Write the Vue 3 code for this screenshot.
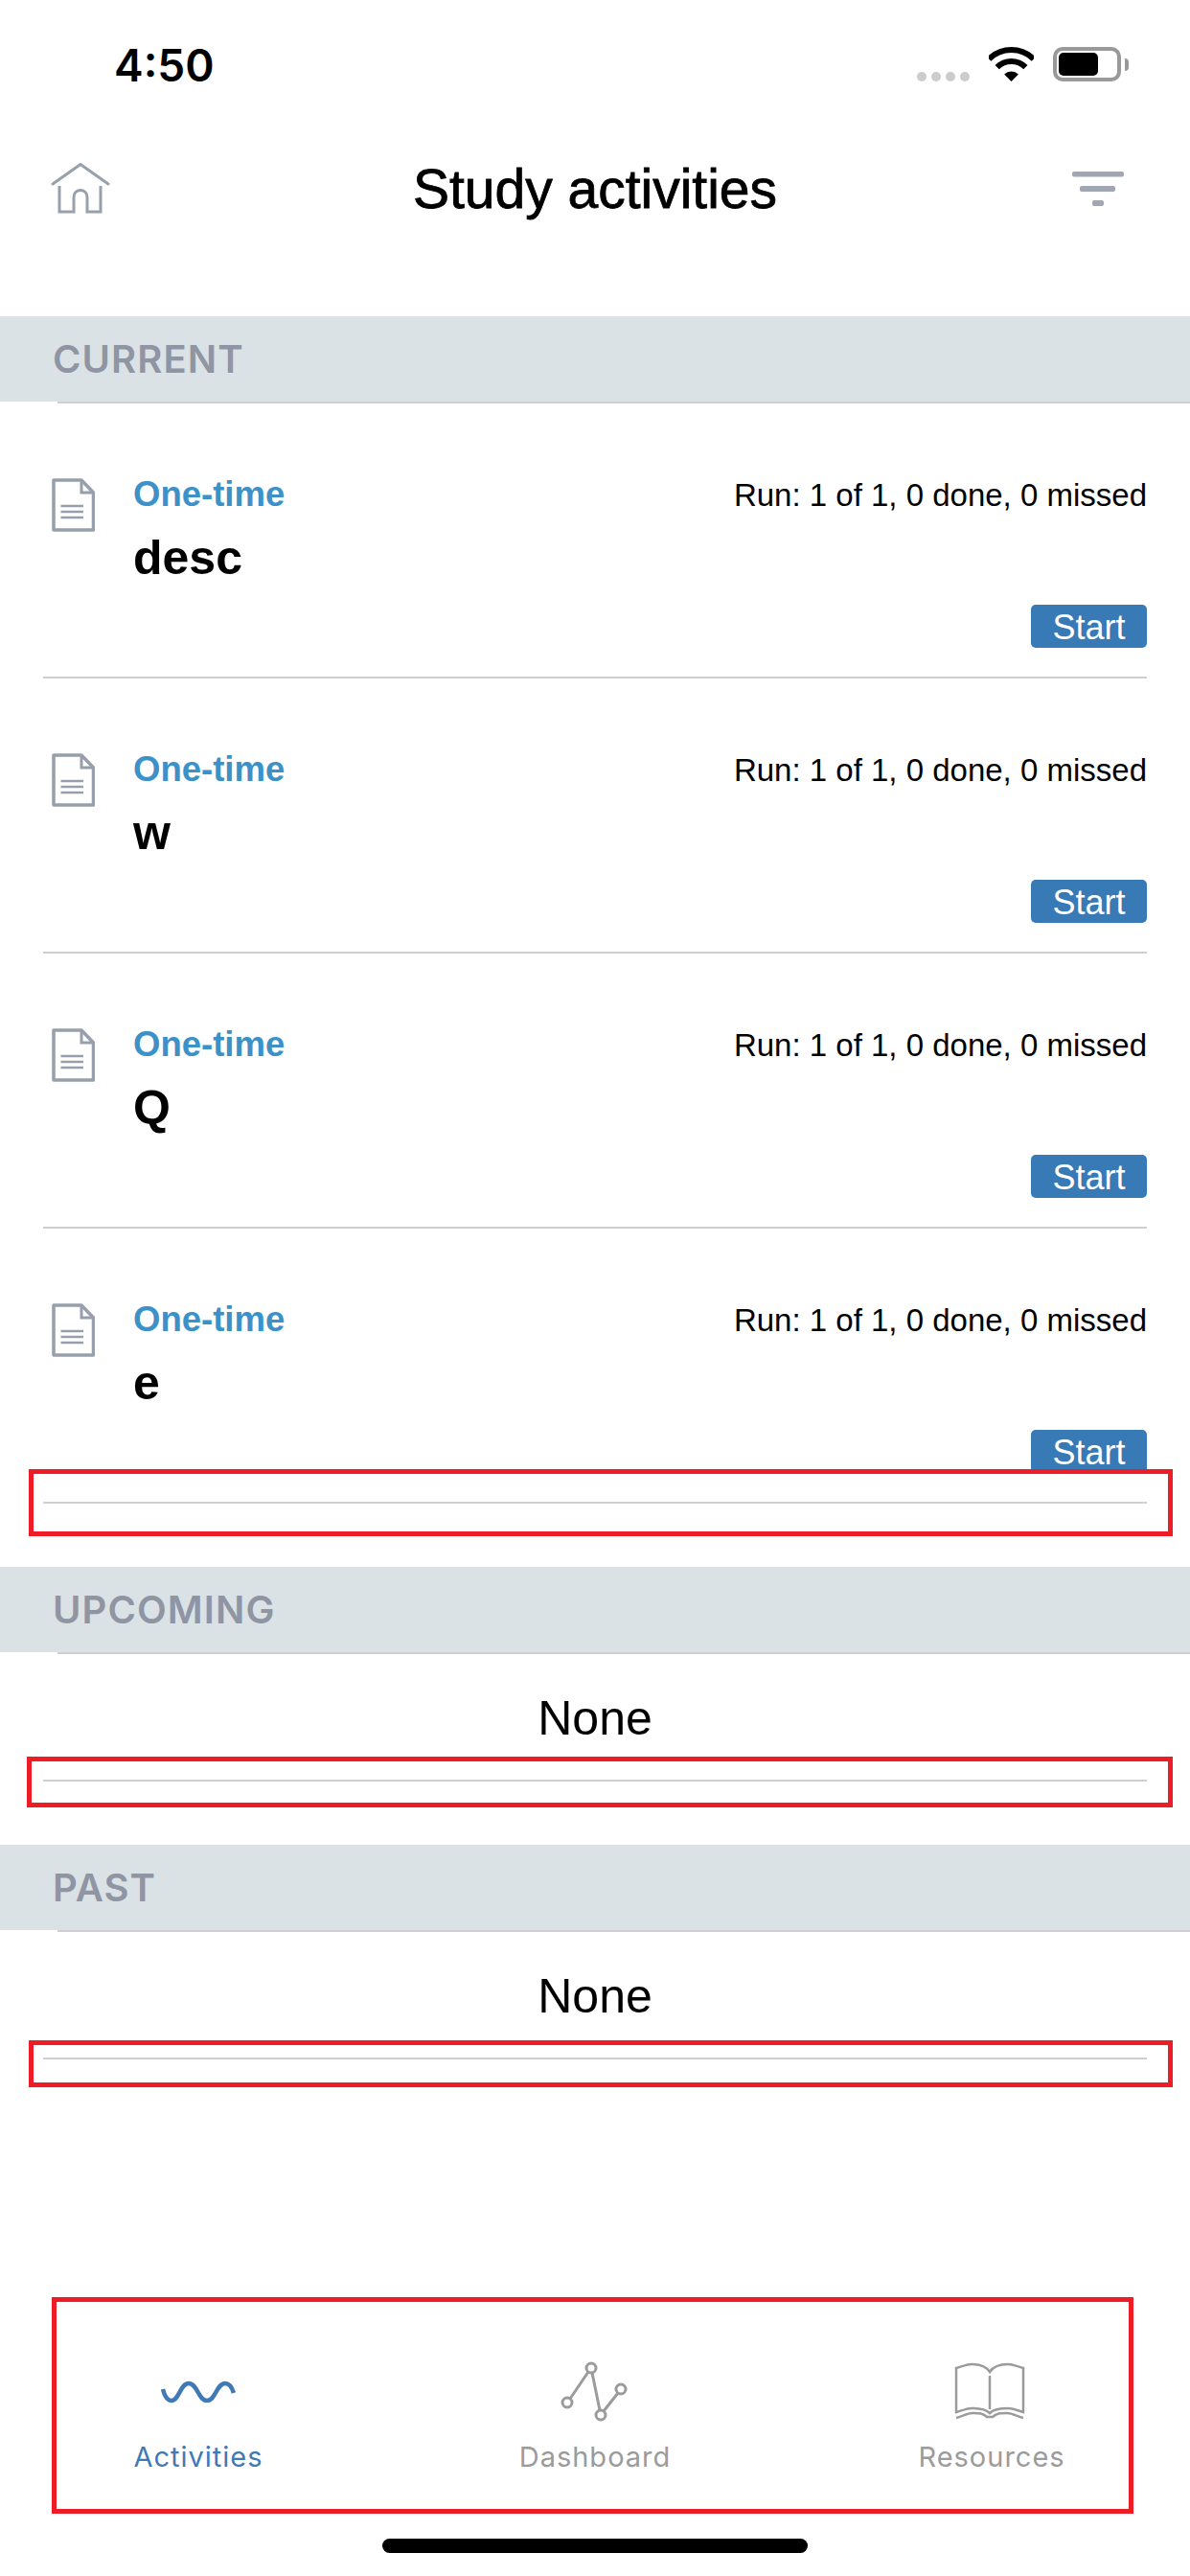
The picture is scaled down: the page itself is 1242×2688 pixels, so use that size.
<template>
  <div class="page">
    <div class="status">
      <span class="time">4:50</span>
      <div class="status-icons">
        <div class="dots"><i v-for="n in 4" :key="n"></i></div>
        <svg class="wifi" width="47" height="36" viewBox="0 0 47 36">
          <path d="M.2 12.7A33 33 0 0 1 46.8 12.7" fill="none" stroke="#000" stroke-width="6" />
          <path d="M8.65 21.15A21 21 0 0 1 38.35 21.15" fill="none" stroke="#000" stroke-width="6" />
          <path d="M23.5 36L16.1 28.6A10.5 10.5 0 0 1 30.9 28.6Z" fill="#000" />
        </svg>
        <div class="battery"><div class="charge"></div></div>
        <div class="nub"></div>
      </div>
    </div>

    <header class="nav">
      <svg class="home" width="64" height="56" viewBox="0 0 64 56" fill="none" stroke="#98a0ae" stroke-width="3">
        <path d="M3 23L32 2.500L61 23" stroke-linecap="round" stroke-linejoin="round" />
        <path d="M10 25V52H25V37C25 27 39 27 39 37V52H53V25" />
      </svg>
      <h1>Study activities</h1>
      <svg class="filter" width="54" height="36" viewBox="0 0 54 36" fill="#a0a6b2">
        <rect x="0" y="0" width="54" height="5.500" rx="2" />
        <rect x="8" y="15" width="37" height="6" rx="2" />
        <rect x="21" y="30" width="12" height="6" rx="2" />
      </svg>
    </header>

    <section class="section current">
      <h2>CURRENT</h2>
      <div class="list">
        <div v-for="item in activities" :key="item" class="row">
          <svg class="doc" width="45" height="56" viewBox="0 0 45 56" fill="none" stroke="#979eac">
            <path d="M2 2H31L43.500 15V54H2Z" stroke-width="3.500" stroke-linejoin="round" />
            <path d="M31 2V15H43.500" stroke-width="3" />
            <path d="M9.500 29H33M9.500 35H33M9.500 41H33" stroke-width="2.500" />
          </svg>
          <div class="row-body">
            <div class="row-top">
              <span class="kind">One-time</span>
              <span class="run">Run: 1 of 1, 0 done, 0 missed</span>
            </div>
            <div class="name">{{ item }}</div>
            <div class="actions"><button class="start">Start</button></div>
          </div>
        </div>
      </div>
      <div class="mark mark-current"></div>
    </section>

    <section class="section upcoming">
      <h2>UPCOMING</h2>
      <div class="list">
        <div class="none">None</div>
      </div>
      <div class="mark mark-upcoming"></div>
    </section>

    <section class="section past">
      <h2>PAST</h2>
      <div class="list">
        <div class="none">None</div>
      </div>
      <div class="mark mark-past"></div>
    </section>

    <nav class="tabs">
      <div v-for="tab in tabs" :key="tab.key" class="tab" :class="{ active: tab.key === 'activities' }">
        <svg v-if="tab.key === 'activities'" width="100" height="70" viewBox="0 0 100 70" fill="none" stroke="#3f7ab6" stroke-width="4.500">
          <path d="M13 33C15 41 18 45 22 45C30 45 31 27 40 27C49 27 50 45 59 45C68 45 69 27 78 27C82 27 85 31 87 37" />
        </svg>
        <svg v-if="tab.key === 'dashboard'" width="100" height="70" viewBox="0 0 100 70" fill="none" stroke="#9b9b9b" stroke-width="3">
          <circle cx="21" cy="47" r="5" />
          <circle cx="46" cy="11" r="5" />
          <circle cx="56" cy="60" r="5" />
          <circle cx="77" cy="33" r="5" />
          <path d="M24 43L43 15M47 16L55 55M59 56L74 37" />
        </svg>
        <svg v-if="tab.key === 'resources'" width="100" height="70" viewBox="0 0 100 70" fill="none" stroke="#9b9b9b" stroke-width="2.500">
          <path d="M13 11C20 9 25 7 29 7C38 7 44 9 48 15C52 9 58 7 67 7C71 7 76 9 83 11V57C76 55 72 53 67 53C58 53 52 54 48 58C44 54 38 53 29 53C25 53 20 55 13 57Z" />
          <path d="M13 63C20 61 25 58 30 58C37 58 41 58 45 62H51C55 58 59 58 66 58C71 58 76 61 83 63" />
          <path d="M48 19V54" />
        </svg>
        <span class="tab-label">{{ tab.label }}</span>
      </div>
      <div class="mark mark-tabs"></div>
    </nav>

    <div class="home-bar"></div>
  </div>
</template>

<script setup>
const activities = ['desc', 'w', 'Q', 'e']

const tabs = [
  { key: 'activities', label: 'Activities' },
  { key: 'dashboard', label: 'Dashboard' },
  { key: 'resources', label: 'Resources' }
]
</script>

<style>
html,
body {
  background: #fff;
}
</style>

<style scoped>
.page {
  width: 1242px;
  height: 2688px;
  display: flex;
  flex-direction: column;
  background: #fff;
  font-family: "Liberation Sans", Arial, sans-serif;
  color: #000;
  overflow: hidden;
}

.status {
  height: 110px;
  flex: none;
  display: flex;
  justify-content: space-between;
  padding: 46px 64px 0 119px;
  box-sizing: border-box;
}

.time {
  font-family: Inter, sans-serif;
  font-size: 46px;
  font-weight: 600;
  line-height: 44px;
}

.status-icons {
  display: flex;
  align-items: flex-start;
  margin-top: 3px;
}

.dots {
  display: flex;
  gap: 5px;
  margin: 26px 20px 0 0;
}

.dots i {
  width: 10px;
  height: 10px;
  border-radius: 50%;
  background: #ccc;
}

.wifi {
  margin-right: 20px;
}

.battery {
  width: 71px;
  height: 36px;
  box-sizing: border-box;
  border: 4px solid #999;
  border-radius: 10px;
  padding: 2px;
}

.charge {
  width: 41px;
  height: 24px;
  background: #000;
  border-radius: 5px;
}

.nub {
  width: 4px;
  height: 13px;
  margin: 12px 0 0 4px;
  background: #999;
  border-radius: 0 4px 4px 0;
}

.nav {
  height: 174px;
  flex: none;
  margin-bottom: 46px;
  padding: 0 52px;
  display: grid;
  grid-template-columns: 1fr auto 1fr;
  align-items: center;
}

.home {
  margin-top: -1px;
}

.nav h1 {
  margin: 0;
  font-size: 57px;
  font-weight: 400;
  line-height: 60px;
  -webkit-text-stroke: 0.8px #000;
  text-align: center;
}

.filter {
  justify-self: end;
  margin-right: 17px;
}

.section {
  position: relative;
  flex: none;
  margin-bottom: 66px;
}

.section h2 {
  margin: 0;
  height: 89px;
  box-sizing: border-box;
  padding: 21px 0 0 55px;
  background: #dae2e5;
  color: #8f95a3;
  font-family: Inter, sans-serif;
  font-size: 40px;
  font-weight: 600;
  line-height: 47px;
  letter-spacing: 1.100px;
}

.list {
  background: linear-gradient(#cfcfcf, #cfcfcf) 60px 0 / 100% 2px no-repeat;
  padding-top: 2px;
}

.row {
  display: flex;
  margin: 0 45px;
  padding: 75px 0 30px 9px;
  border-bottom: 2px solid #cfcfcf;
}

.doc {
  flex: none;
  margin: 3px 40px 0 0;
}

.row-body {
  flex: 1;
}

.row-top {
  height: 40px;
  display: flex;
  justify-content: space-between;
}

.kind {
  color: #3c92c8;
  font-size: 36.500px;
  font-weight: 700;
  line-height: 40px;
}

.run {
  margin-top: 1px;
  font-size: 33px;
  line-height: 40px;
}

.name {
  margin-top: 18px;
  font-size: 50px;
  font-weight: 700;
  line-height: 56px;
}

.actions {
  display: flex;
  justify-content: flex-end;
  margin-top: 21px;
}

.start {
  width: 121px;
  height: 45px;
  padding: 2px 0 0;
  border: 0;
  border-radius: 5px;
  background: #377ab5;
  color: #fff;
  font-family: inherit;
  font-size: 36px;
  line-height: 43px;
}

.none {
  margin: 0 45px;
  padding: 39px 0 36px;
  border-bottom: 2px solid #cfcfcf;
  font-size: 50px;
  line-height: 56px;
  text-align: center;
}

.mark {
  position: absolute;
  box-sizing: border-box;
  border: 5px solid #ee1c25;
  pointer-events: none;
}

.mark-current {
  left: 30px;
  right: 18px;
  bottom: -34px;
  height: 70px;
}

.mark-upcoming {
  left: 28px;
  right: 18px;
  bottom: -27px;
  height: 53px;
}

.mark-past {
  left: 30px;
  right: 18px;
  bottom: -29px;
  height: 49px;
}

.tabs {
  position: relative;
  flex: none;
  margin-top: auto;
  display: grid;
  grid-template-columns: repeat(3, 1fr);
}

.tab {
  display: flex;
  flex-direction: column;
  align-items: center;
  color: #9b9b9b;
}

.tab.active {
  color: #3f7ab6;
}

.tab-label {
  margin-top: 16px;
  font-family: Inter, sans-serif;
  font-size: 29px;
  line-height: 36px;
  letter-spacing: 1px;
}

.mark-tabs {
  left: 54px;
  width: 1129px;
  top: -63px;
  height: 226px;
}

.home-bar {
  flex: none;
  width: 444px;
  height: 15px;
  margin: 67px auto 24px;
  border-radius: 8px;
  background: #000;
}
</style>
